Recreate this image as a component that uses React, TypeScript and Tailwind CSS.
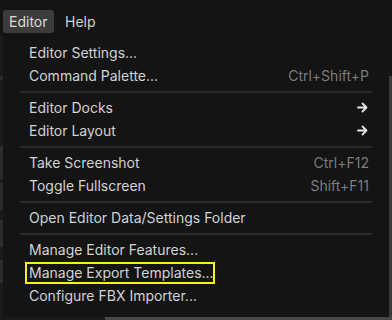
import React from "react";

const Arrow = () => (
  <svg width="11" height="11" viewBox="0 0 11 11" className="text-[#e6e6e6]">
    <path d="M1 5.5H9.5M5.5 1.5L9.5 5.5L5.5 9.5" fill="none" stroke="currentColor" strokeWidth="1.8" strokeLinecap="round" strokeLinejoin="round" />
  </svg>
);

type Item = { label: string; shortcut?: string; sub?: boolean; hl?: boolean };

const groups: Item[][] = [
  [{ label: "Editor Settings..." }, { label: "Command Palette...", shortcut: "Ctrl+Shift+P" }],
  [{ label: "Editor Docks", sub: true }, { label: "Editor Layout", sub: true }],
  [{ label: "Take Screenshot", shortcut: "Ctrl+F12" }, { label: "Toggle Fullscreen", shortcut: "Shift+F11" }],
  [{ label: "Open Editor Data/Settings Folder" }],
  [{ label: "Manage Editor Features..." }, { label: "Manage Export Templates...", hl: true }, { label: "Configure FBX Importer..." }],
];

const Row = ({ it }: { it: Item }) => (
  <div className="relative h-[23px] flex items-center pl-[26px] pr-[20px]">
    <span className="text-[14px] text-[#d2d2d2] whitespace-nowrap">{it.label}</span>
    <div className="flex-1" />
    {it.shortcut && <span className="text-[14px] text-[#7c7c7c] whitespace-nowrap">{it.shortcut}</span>}
    {it.sub && <span className="mr-[1px] flex"><Arrow /></span>}
    {it.hl && <div className="absolute left-[22px] top-[1.5px] w-[190px] h-[22px] border-2 border-[#f5f01e]" />}
  </div>
);

export default function App() {
  return (
    <div className="relative w-[392px] h-[320px] overflow-hidden bg-[#141414]" style={{ fontFamily: "Inter, 'Noto Sans', sans-serif" }}>
      <div className="flex flex-col h-full">
        <div className="h-[36px] shrink-0 flex items-start pt-[10px] pl-[3px] gap-[4px]">
          <div className="h-[23px] w-[51px] rounded-[3px] bg-[#3c3c3c] flex items-center pl-[6px] text-[14px] text-[#dcdcdc]">Editor</div>
          <div className="h-[23px] flex items-center pl-[7px] text-[14px] text-[#d2d2d2]">Help</div>
        </div>
        <div className="flex-1 flex">
          <div className="w-[3px] flex flex-col bg-[#1b1b1b]">
            <div className="h-[40px]" />
            <div className="h-[4px] bg-[#2a2a2a]" />
            <div className="h-[66px]" />
            <div className="h-[33px] bg-[#2c2c2c]" />
            <div className="h-[4px]" />
            <div className="h-[27px] bg-[#2c2c2c]" />
            <div className="h-[10px]" />
            <div className="h-[27px] bg-[#2c2c2c]" />
            <div className="h-[13px]" />
            <div className="h-[23px] bg-[#2c2c2c]" />
          </div>
          <div className="flex-1" />
          <div className="w-[3px] flex flex-col">
            <div className="h-[40px]" />
            <div className="flex-1 bg-[#3a3a3a]" />
          </div>
        </div>
        <div className="h-[3px] shrink-0 flex">
          <div className="w-[105px] bg-[#1b1b1b]" />
          <div className="flex-1 bg-[#474747]" />
        </div>
      </div>

      <div className="absolute left-[3px] top-[33px] w-[386px] h-[284px] bg-[#141414] pt-[7.5px]">
        {groups.map((g, gi) => (
          <div key={gi}>
            {gi > 0 && <div className="mx-[17px] mt-[4px] mb-[3px] h-[2px] bg-[#2a2a2a]" />}
            {g.map((it) => (
              <Row key={it.label} it={it} />
            ))}
          </div>
        ))}
      </div>
    </div>
  );
}
